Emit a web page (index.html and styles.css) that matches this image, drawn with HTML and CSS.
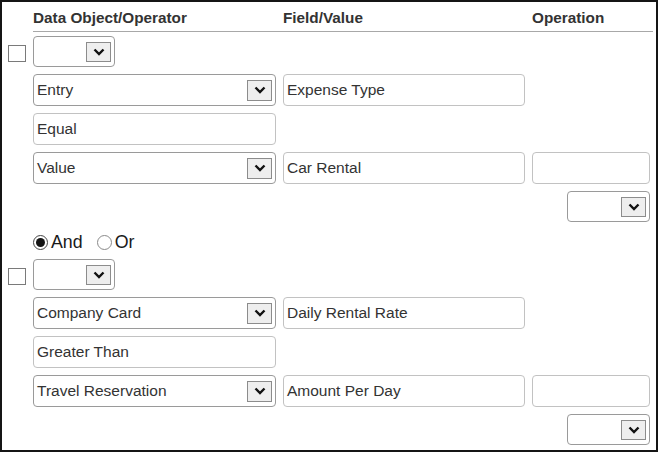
FILE: index.html
```html
<!DOCTYPE html>
<html>
<head>
<meta charset="utf-8">
<link rel="stylesheet" href="styles.css">
</head>
<body>
<div class="frame">
  <div class="head">
    <div class="hcol w1">Data Object/Operator</div>
    <div class="hcol w2">Field/Value</div>
    <div class="hcol w3">Operation</div>
  </div>
  <div class="rules">
    <div class="row flush">
      <span class="check"></span>
      <div class="select small"><span class="val"></span><span class="arrow"><svg viewBox="0 0 12 8" width="12" height="8"><path d="M1.5 1.5 L6 6 L10.5 1.5" fill="none" stroke="#111" stroke-width="2.4"/></svg></span></div>
    </div>
    <div class="row">
      <div class="select w1"><span class="val">Entry</span><span class="arrow"><svg viewBox="0 0 12 8" width="12" height="8"><path d="M1.5 1.5 L6 6 L10.5 1.5" fill="none" stroke="#111" stroke-width="2.4"/></svg></span></div>
      <div class="field w2">Expense Type</div>
    </div>
    <div class="row">
      <div class="field w1">Equal</div>
    </div>
    <div class="row">
      <div class="select w1"><span class="val">Value</span><span class="arrow"><svg viewBox="0 0 12 8" width="12" height="8"><path d="M1.5 1.5 L6 6 L10.5 1.5" fill="none" stroke="#111" stroke-width="2.4"/></svg></span></div>
      <div class="field w2">Car Rental</div>
      <div class="field w3"></div>
    </div>
    <div class="row end">
      <div class="select small op"><span class="val"></span><span class="arrow"><svg viewBox="0 0 12 8" width="12" height="8"><path d="M1.5 1.5 L6 6 L10.5 1.5" fill="none" stroke="#111" stroke-width="2.4"/></svg></span></div>
    </div>
    <div class="row radios">
      <span class="radio on"></span><span class="rlabel">And</span>
      <span class="radio off"></span><span class="rlabel">Or</span>
    </div>
    <div class="row flush">
      <span class="check"></span>
      <div class="select small"><span class="val"></span><span class="arrow"><svg viewBox="0 0 12 8" width="12" height="8"><path d="M1.5 1.5 L6 6 L10.5 1.5" fill="none" stroke="#111" stroke-width="2.4"/></svg></span></div>
    </div>
    <div class="row">
      <div class="select w1"><span class="val">Company Card</span><span class="arrow"><svg viewBox="0 0 12 8" width="12" height="8"><path d="M1.5 1.5 L6 6 L10.5 1.5" fill="none" stroke="#111" stroke-width="2.4"/></svg></span></div>
      <div class="field w2">Daily Rental Rate</div>
    </div>
    <div class="row">
      <div class="field w1">Greater Than</div>
    </div>
    <div class="row">
      <div class="select w1"><span class="val">Travel Reservation</span><span class="arrow"><svg viewBox="0 0 12 8" width="12" height="8"><path d="M1.5 1.5 L6 6 L10.5 1.5" fill="none" stroke="#111" stroke-width="2.4"/></svg></span></div>
      <div class="field w2">Amount Per Day</div>
      <div class="field w3"></div>
    </div>
    <div class="row end">
      <div class="select small op"><span class="val"></span><span class="arrow"><svg viewBox="0 0 12 8" width="12" height="8"><path d="M1.5 1.5 L6 6 L10.5 1.5" fill="none" stroke="#111" stroke-width="2.4"/></svg></span></div>
    </div>
  </div>
</div>
</body>
</html>
```

FILE: styles.css
```css
* { box-sizing: border-box; }
html, body { margin: 0; padding: 0; background: #fff; }
body { font-family: "Liberation Sans", Arial, sans-serif; color: #333; }

.frame {
  width: 658px;
  height: 452px;
  border: 2px solid #151515;
  overflow: hidden;
}

.head {
  display: flex;
  gap: 7px;
  margin: 0 3px 0 31px;
  padding-top: 7px;
  padding-bottom: 5px;
  border-bottom: 1px solid #a8a8a8;
  font-weight: bold;
  font-size: 15.3px;
  line-height: 17px;
  color: #333;
}

.w1 { width: 243px; }
.w2 { width: 242px; }
.w3 { width: 118px; }

.rules {
  display: flex;
  flex-direction: column;
  gap: 7px;
  padding: 4px 6px 0 6px;
}

.row {
  display: flex;
  align-items: center;
  gap: 7px;
  padding-left: 25px;
  font-size: 15.5px;
}
.row.flush { padding-left: 0; }
.row.end { justify-content: flex-end; }

.check {
  width: 18px;
  height: 17px;
  margin-top: 3px;
  border: 1px solid #7a7a7a;
  background: #fff;
}

.select, .field {
  height: 32px;
  border-radius: 4px;
  display: flex;
  align-items: center;
  padding: 0 3px;
  color: #333;
  white-space: nowrap;
}
.select {
  border: 1px solid #9a9a9a;
  justify-content: space-between;
}
.field {
  border: 1px solid #c2c2c2;
}
.select.small { width: 82px; height: 31px; }
.select.small.op { width: 83px; }

.arrow {
  width: 25px;
  height: 21px;
  border: 1px solid #8c8c8c;
  background: #eeeeee;
  display: flex;
  align-items: center;
  justify-content: center;
}
.select.small .arrow { height: 20px; }

.radios {
  height: 20px;
  margin-top: 3px;
  gap: 0;
  font-size: 17.8px;
  color: #1a1a1a;
}
.radio {
  width: 15px;
  height: 15px;
  border-radius: 50%;
  background: #fff;
  position: relative;
  margin-right: 3px;
}
.radio.on { border: 1px solid #444; }
.radio.on::after {
  content: "";
  position: absolute;
  left: 2px;
  top: 2px;
  width: 9px;
  height: 9px;
  border-radius: 50%;
  background: #151515;
}
.radio.off { border: 1px solid #8a8a8a; margin-left: 14px; }
.rlabel { line-height: 20px; }
```
